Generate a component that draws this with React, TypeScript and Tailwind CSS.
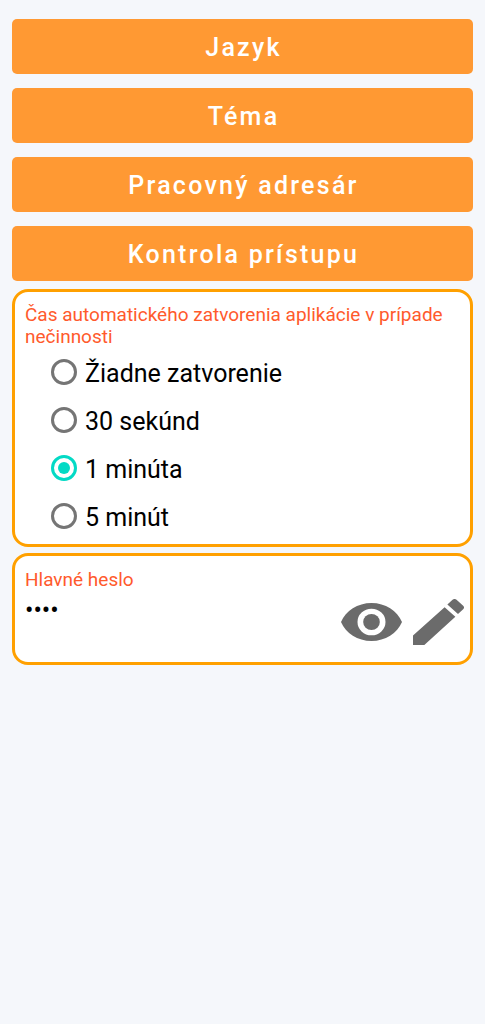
import { useState } from "react";

const sections = ["Jazyk", "Téma", "Pracovný adresár", "Kontrola prístupu"];
const timeouts = ["Žiadne zatvorenie", "30 sekúnd", "1 minúta", "5 minút"];

function EyeIcon() {
  return (
    <svg
      viewBox="1 4.5 22 15"
      preserveAspectRatio="none"
      className="h-[38px] w-[61px] fill-[#6b6b6b]"
      aria-hidden="true"
    >
      <path
        fillRule="evenodd"
        d="M12 4.5C7 4.5 2.73 7.61 1 12c1.73 4.39 6 7.5 11 7.5s9.27-3.11 11-7.5c-1.73-4.39-6-7.5-11-7.5zM6.95 12a5.05 5.25 0 1 0 10.1 0a5.05 5.25 0 1 0-10.1 0z"
      />
      <ellipse cx="12" cy="12" rx="3" ry="3.15" />
    </svg>
  );
}

function PencilIcon() {
  return (
    <svg
      viewBox="3 3 18 18"
      preserveAspectRatio="none"
      className="h-[46px] w-[51px] fill-[#6b6b6b]"
      aria-hidden="true"
    >
      <path d="M3 17.25V21h4L17.95 9.94l-3.8-3.75L3 17.25zM20.71 7.04c.39-.39.39-1.02 0-1.41l-2.34-2.34c-.39-.39-1.02-.39-1.41 0l-1.83 1.83 3.75 3.75 1.83-1.83z" />
    </svg>
  );
}

export default function App() {
  const [timeout, setTimeoutValue] = useState("1 minúta");
  const [visible, setVisible] = useState(false);

  return (
    <main className="min-h-screen bg-[#f5f7fb] px-3 pt-[19px] font-['Roboto',sans-serif]">
      <nav className="flex flex-col gap-[14px]">
        {sections.map((name) => (
          <button
            key={name}
            type="button"
            className="h-[55px] w-full rounded-[5px] bg-[#ff9933] pt-[3px] pl-[2px] text-[25px] font-medium tracking-[0.09em] text-white"
          >
            {name}
          </button>
        ))}
      </nav>

      <fieldset className="mt-2 rounded-2xl border-[3px] border-[#ffa000] bg-white px-[10px] pt-3 pb-1">
        <p id="timeout-title" className="text-[19px] leading-[22px] text-[#ff5a2c]">
          Čas automatického zatvorenia aplikácie v prípade nečinnosti
        </p>
        <div role="radiogroup" aria-labelledby="timeout-title" className="pl-[26px]">
          {timeouts.map((name) => (
            <label key={name} className="flex h-12 items-center gap-2 text-[25px] text-black">
              <input
                type="radio"
                name="timeout"
                checked={timeout === name}
                onChange={() => setTimeoutValue(name)}
                className="grid size-[26px] shrink-0 appearance-none place-content-center rounded-full border-[3px] border-[#757575] before:size-3 before:rounded-full checked:border-[#03dac5] checked:before:bg-[#03dac5]"
              />
              <span className="pt-1">{name}</span>
            </label>
          ))}
        </div>
      </fieldset>

      <section className="mt-[6px] flex rounded-2xl border-[3px] border-[#ffa000] bg-white pt-[13px] pr-[6px] pb-[17px] pl-[10px]">
        <div className="min-w-0 flex-1">
          <label htmlFor="password" className="block text-[19px] leading-[22px] text-[#ff5a2c]">
            Hlavné heslo
          </label>
          <input
            id="password"
            type={visible ? "text" : "password"}
            readOnly
            defaultValue="1234"
            className="h-[38px] w-full bg-transparent text-[25px] text-black outline-none"
          />
        </div>
        <div className="flex items-end gap-[11px] pt-[30px]">
          <button
            type="button"
            aria-label="Zobraziť heslo"
            onClick={() => setVisible(!visible)}
            className="flex h-[46px] items-center"
          >
            <EyeIcon />
          </button>
          <button type="button" aria-label="Upraviť heslo">
            <PencilIcon />
          </button>
        </div>
      </section>
    </main>
  );
}
